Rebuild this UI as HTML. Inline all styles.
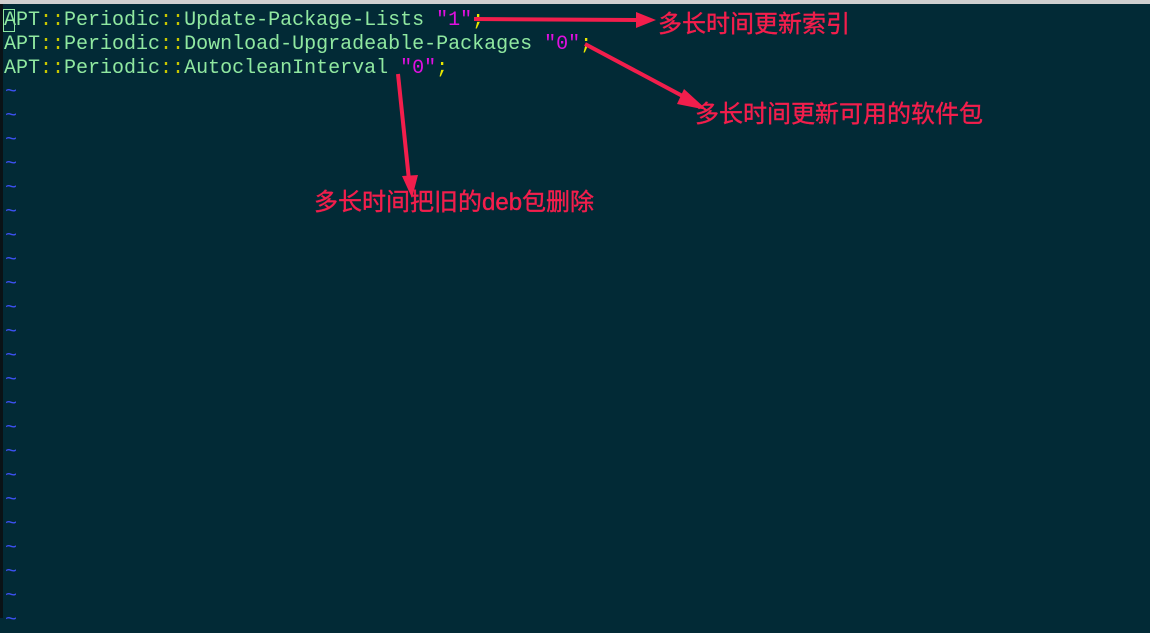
<!DOCTYPE html>
<html><head><meta charset="utf-8"><style>
html,body{margin:0;padding:0}
body{width:1150px;height:618px;background:#022a36;position:relative;overflow:hidden}
#top{position:absolute;left:0;top:0;width:1150px;height:4px;background:#cfcfcf}
#left{position:absolute;left:0;top:4px;width:3px;height:614px;background:#0a1216}
.l{position:absolute;left:4px;font:20px/24px "Liberation Mono",monospace;color:#90e8a0;white-space:pre}
.y{color:#c8c800}.m{color:#e010e0}.s{color:#e8e800}
.t{position:absolute;left:5px;font:20px/24px "Liberation Mono",monospace;color:#3c50f0}
.a{position:absolute;font:24px/30px "Liberation Sans","Noto Sans CJK SC",sans-serif;color:#f21e4c;white-space:nowrap;-webkit-text-stroke:0.4px #f21e4c}
#cur{position:absolute;left:3px;top:9px;width:12px;height:23px;border:1px solid #90e8a0;box-sizing:border-box}
</style></head><body>
<div id="top"></div><div id="left"></div>
<div id="cur"></div>
<div class="l" style="top:9px">APT<span class="y">::</span>Periodic<span class="y">::</span>Update-Package-Lists <span class="m">"1"</span><span class="s">;</span></div>
<div class="l" style="top:33px">APT<span class="y">::</span>Periodic<span class="y">::</span>Download-Upgradeable-Packages <span class="m">"0"</span><span class="s">;</span></div>
<div class="l" style="top:57px">APT<span class="y">::</span>Periodic<span class="y">::</span>AutocleanInterval <span class="m">"0"</span><span class="s">;</span></div>
<div class="t" style="top:81px">~<br>~<br>~<br>~<br>~<br>~<br>~<br>~<br>~<br>~<br>~<br>~<br>~<br>~<br>~<br>~<br>~<br>~<br>~<br>~<br>~<br>~<br>~</div>
<svg style="position:absolute;left:0;top:0" width="1150" height="618">
<g stroke="#f21e4c" stroke-width="4" fill="#f21e4c">
<line x1="474" y1="19" x2="640" y2="20"/>
<polygon points="656,20 636,12 636,28" stroke="none"/>
<line x1="585" y1="44" x2="690" y2="100"/>
<polygon points="707,110 684,89 677,104" stroke="none"/>
<line x1="398" y1="74" x2="409" y2="180"/>
<polygon points="412,198 402,176 418,175" stroke="none"/>
</g></svg>
<div class="a" style="left:658px;top:10px">多长时间更新索引</div>
<div class="a" style="left:695px;top:100px">多长时间更新可用的软件包</div>
<div class="a" style="left:314px;top:188px">多长时间把旧的deb包删除</div>
</body></html>
